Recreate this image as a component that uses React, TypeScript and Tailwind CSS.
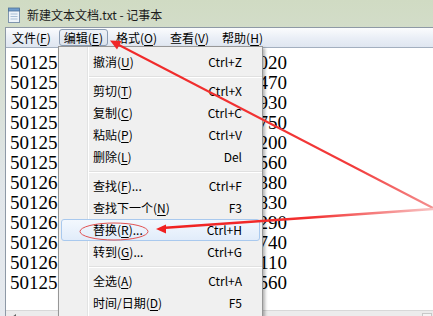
import React from 'react'

const cjk = { fontFamily: '"Noto Sans CJK SC", "Noto Sans", sans-serif' }
const serif = { fontFamily: '"Liberation Serif", "Times New Roman", serif' }

const lines: [string, string][] = [
  ['50125', '1020'],
  ['50125', '2470'],
  ['50125', '1930'],
  ['50125', '1750'],
  ['50125', '2200'],
  ['50125', '1560'],
  ['50126', '3380'],
  ['50126', '1830'],
  ['50126', '2290'],
  ['50126', '1740'],
  ['50126', '2110'],
  ['50125', '1560'],
]

type Item = { label: string; key: string; after?: string; shortcut?: string; active?: boolean } | 'sep'

const items: Item[] = [
  { label: '撤消', key: 'U', shortcut: 'Ctrl+Z' },
  'sep',
  { label: '剪切', key: 'T', shortcut: 'Ctrl+X' },
  { label: '复制', key: 'C', shortcut: 'Ctrl+C' },
  { label: '粘贴', key: 'P', shortcut: 'Ctrl+V' },
  { label: '删除', key: 'L', shortcut: 'Del' },
  'sep',
  { label: '查找', key: 'F', after: '...', shortcut: 'Ctrl+F' },
  { label: '查找下一个', key: 'N', shortcut: 'F3' },
  { label: '替换', key: 'R', after: '...', shortcut: 'Ctrl+H', active: true },
  { label: '转到', key: 'G', after: '...', shortcut: 'Ctrl+G' },
  'sep',
  { label: '全选', key: 'A', shortcut: 'Ctrl+A' },
  { label: '时间/日期', key: 'D', shortcut: 'F5' },
]

const menus: { label: string; key: string; open?: boolean }[] = [
  { label: '文件', key: 'F' },
  { label: '编辑', key: 'E', open: true },
  { label: '格式', key: 'O' },
  { label: '查看', key: 'V' },
  { label: '帮助', key: 'H' },
]

// little notepad page in the title bar
const NotepadIcon = () => (
  <svg width="14" height="16" viewBox="0 0 14 16">
    <rect x="1.5" y="2.5" width="11" height="13" fill="#eef4fa" stroke="#7f95ad" />
    <rect x="1.5" y="1" width="11" height="3" fill="#6f9ccc" stroke="#4f7296" strokeWidth="0.8" />
    <line x1="3.5" y1="7" x2="10.5" y2="7" stroke="#a9bfd6" />
    <line x1="3.5" y1="9.5" x2="10.5" y2="9.5" stroke="#a9bfd6" />
    <line x1="3.5" y1="12" x2="10.5" y2="12" stroke="#a9bfd6" />
  </svg>
)

const Mnemonic = ({ label, k, after }: { label: string; k: string; after?: string }) => (
  <span>
    {label}(<span className="underline underline-offset-2">{k}</span>){after}
  </span>
)

export default function App() {
  return (
    <div
      className="relative flex h-[316px] w-[433px] flex-col overflow-hidden bg-[linear-gradient(to_bottom,#d0dbc3,#e1e6ea_60%,#e6eaef)] text-black"
      style={cjk}
    >
      {/* Title bar */}
      <div className="flex h-[27px] shrink-0 items-center gap-[6px] pl-[7px] pt-[2px]">
        <NotepadIcon />
        <span className="text-[12px] text-[#1b1b1b]">新建文本文档.txt - 记事本</span>
      </div>

      {/* Window body with frame on the left */}
      <div className="ml-[5px] flex shrink-0 flex-col border-l border-t border-[#8e99a6]">
        {/* Menu bar */}
        <div className="flex h-[19px] shrink-0 items-center gap-[3px] bg-[linear-gradient(to_bottom,#fbfcfd,#e9eef6_55%,#dfe6f0)] pl-[1px] text-[12px]">
          {menus.map((m) => (
            <div
              key={m.label}
              className={`flex h-[17px] items-center rounded-[3px] border px-[4px] ${
                m.open
                  ? 'border-[#8c9db3] bg-[linear-gradient(to_bottom,#eef2f7,#dbe2ec)]'
                  : 'border-transparent'
              }`}
            >
              <Mnemonic label={m.label} k={m.key} />
            </div>
          ))}
        </div>

        {/* Editor */}
        <div className="flex shrink-0 flex-col border-t border-[#a3afbf] bg-white">
          <div className="h-[262px] shrink-0 pl-[4px] pt-[5px] text-[19px] leading-[20px]" style={serif}>
            {lines.map(([a, b], i) => (
              <div key={i} className="flex w-[277px] justify-between">
                <span>{a}</span>
                <span>{b}</span>
              </div>
            ))}
          </div>
          {/* Horizontal scrollbar */}
          <div className="flex h-[17px] shrink-0 items-start border-t border-[#d8d8d8] bg-[#ececec]">
            <div className="ml-[6px] mt-[3px] h-0 w-0 border-y-[3px] border-r-[4px] border-y-transparent border-r-[#606060]" />
            <div className="ml-auto mr-[1px] mt-[2px] h-[15px] w-[10px] border border-[#c8c8c8] bg-[#f4f4f4]" />
          </div>
        </div>
      </div>

      {/* Edit drop-down menu */}
      <div className="absolute left-[58px] top-[46px] w-[205px] border border-[#979797] bg-[#f0f0f0] pb-[10px] pt-[4px] text-[12px] shadow-[2px_2px_3px_rgba(0,0,0,0.3)]">
        <div className="absolute bottom-0 left-[28px] top-0 w-[2px] border-l border-[#e2e3e3] bg-white" />
        {items.map((it, i) =>
          it === 'sep' ? (
            <div key={i} className="relative flex h-[7px] items-center pl-[30px]">
              <div className="h-[2px] w-full border-t border-[#e0e0e0] bg-white" />
            </div>
          ) : (
            <div
              key={i}
              className={`relative mx-[2px] flex h-[22px] items-center justify-between rounded-[3px] border pl-[31px] pr-[17px] ${
                it.active
                  ? 'border-[#a9c9ee] bg-[linear-gradient(to_bottom,#f3f8fe,#e1ecfa)]'
                  : 'border-transparent'
              }`}
            >
              <Mnemonic label={it.label} k={it.key} after={it.after} />
              <span>{it.shortcut}</span>
            </div>
          )
        )}
      </div>

      {/* Red annotation arrows */}
      <svg className="pointer-events-none absolute left-0 top-0" width="433" height="316" viewBox="0 0 433 316">
        <defs>
          <linearGradient id="fade1" gradientUnits="userSpaceOnUse" x1="116" y1="43" x2="433" y2="208">
            <stop offset="0" stopColor="#f02828" />
            <stop offset="0.75" stopColor="#f23a3a" />
            <stop offset="1" stopColor="#f49090" />
          </linearGradient>
          <linearGradient id="fade2" gradientUnits="userSpaceOnUse" x1="160" y1="228" x2="433" y2="209">
            <stop offset="0" stopColor="#f02020" />
            <stop offset="0.55" stopColor="#f23030" />
            <stop offset="1" stopColor="#f8c4c4" />
          </linearGradient>
        </defs>
        <line x1="433" y1="208" x2="117" y2="44" stroke="url(#fade1)" strokeWidth="2" />
        <polygon points="110,40.5 121.5,41 117,49.5" fill="#f02828" />
        <line x1="433" y1="209" x2="162" y2="228" stroke="url(#fade2)" strokeWidth="2.5" />
        <polygon points="156,229 166,224.5 166,233.5" fill="#f02020" />
        <ellipse cx="114" cy="231.5" rx="34" ry="8.5" fill="none" stroke="#e25252" strokeWidth="1" />
      </svg>
    </div>
  )
}
